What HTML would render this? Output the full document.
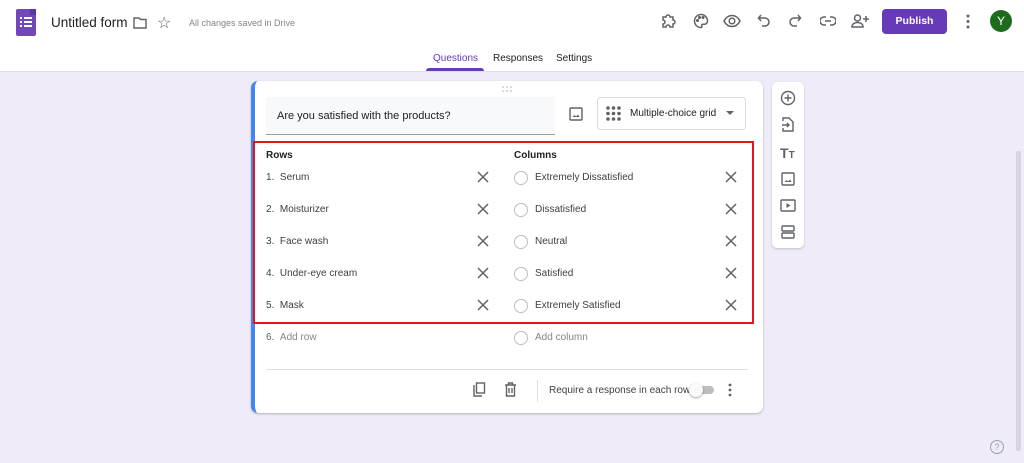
<!DOCTYPE html>
<html><head><meta charset="utf-8"><style>
*{margin:0;padding:0;box-sizing:border-box}
body{width:1024px;height:463px;overflow:hidden;background:#f0ebf8;font-family:"Liberation Sans",Arial,sans-serif;position:relative;color:#202124}
.a{position:absolute}
.hdr{left:0;top:0;width:1024px;height:72px;background:#fff;border-bottom:1px solid #e0e0e0}
.t{font-size:10px;color:#3c4043;white-space:nowrap}
.r{width:14px;height:14px;border:1.5px solid #bdbdbd;border-radius:50%}
svg{display:block}
</style></head><body>
<div class="a hdr"></div>
<div class="a" style="left:16px;top:9px;width:20px;height:27px;background:#7248b9;border-radius:2px"></div>
<div class="a" style="left:30px;top:9px;width:6px;height:6px;background:#5d34a5"></div>
<svg class="a" style="left:20px;top:16px" width="12" height="12"><g fill="#fff"><rect x="0" y="1" width="2" height="2"/><rect x="4" y="1" width="8" height="2"/><rect x="0" y="5" width="2" height="2"/><rect x="4" y="5" width="8" height="2"/><rect x="0" y="9" width="2" height="2"/><rect x="4" y="9" width="8" height="2"/></g></svg>
<div class="a" style="left:51px;top:15px;font-size:13.5px;color:#202124;white-space:nowrap">Untitled form</div>
<svg class="a" style="left:133px;top:17px" width="14" height="12"><path d="M1 1h5l1.5 1.5H13V11H1z" fill="none" stroke="#5f6368" stroke-width="1.4"/></svg>
<div class="a" style="left:157px;top:13px;font-size:16px;color:#5f6368">☆</div>
<div class="a" style="left:189px;top:18px;font-size:9px;color:#80868b">All changes saved in Drive</div>
<svg class="a" style="left:660px;top:13px" width="16" height="16" fill="none" stroke="#5f6368" stroke-width="1.5"><path d="M3 4h3a2 2 0 1 1 4 0h3v3a2 2 0 1 1 0 4v3H10a2 2 0 1 0-4 0H3v-3a2 2 0 1 0 0-4z"/></svg>
<svg class="a" style="left:693px;top:13px" width="16" height="16" fill="none" stroke="#5f6368" stroke-width="1.5"><path d="M8 1.5a6.5 6.5 0 1 0 0 13c1 0 1.3-.8.8-1.5-.5-.8 0-1.8 1-1.8h1.7a3 3 0 0 0 3-3C14.5 4.4 11.6 1.5 8 1.5z"/><circle cx="4.5" cy="7.5" r=".8"/><circle cx="6.5" cy="4.5" r=".8"/><circle cx="10" cy="4.5" r=".8"/></svg>
<svg class="a" style="left:723px;top:14px" width="18" height="14" fill="none" stroke="#5f6368" stroke-width="1.5"><path d="M1 7c2-4 5-5.5 8-5.5S15 3 17 7c-2 4-5 5.5-8 5.5S3 11 1 7z"/><circle cx="9" cy="7" r="2.8"/></svg>
<svg class="a" style="left:757px;top:14px" width="14" height="14" fill="none" stroke="#5f6368" stroke-width="1.5"><path d="M4 1L1.5 4 4 7M1.5 4H8a4 4 0 0 1 0 8H5"/></svg>
<svg class="a" style="left:788px;top:14px" width="14" height="14" fill="none" stroke="#5f6368" stroke-width="1.5"><path d="M10 1l2.5 3L10 7M12.5 4H6a4 4 0 0 0 0 8h3"/></svg>
<svg class="a" style="left:820px;top:15px" width="16" height="12" fill="none" stroke="#5f6368" stroke-width="1.5"><path d="M6 2H4a4 4 0 0 0 0 8h2M10 2h2a4 4 0 0 1 0 8h-2M5 6h6"/></svg>
<svg class="a" style="left:851px;top:13px" width="18" height="16" fill="none" stroke="#5f6368" stroke-width="1.5"><circle cx="6.5" cy="5" r="3"/><path d="M1 14c0-3 2.5-4.5 5.5-4.5S12 11 12 14zM15 3v6M12 6h6"/></svg>
<div class="a" style="left:882px;top:9px;width:65px;height:25px;background:#673ab7;border-radius:4px;color:#fff;font-size:10.5px;font-weight:bold;text-align:center;line-height:25px">Publish</div>
<svg class="a" style="left:966px;top:14px" width="4" height="15" fill="#5f6368"><circle cx="2" cy="2" r="1.5"/><circle cx="2" cy="7.5" r="1.5"/><circle cx="2" cy="13" r="1.5"/></svg>
<div class="a" style="left:990px;top:10px;width:22px;height:22px;border-radius:50%;background:#1e6b1e;color:#fff;font-size:12px;text-align:center;line-height:22px">Y</div>
<div class="a" style="left:433px;top:53px;font-size:10px;color:#673ab7">Questions</div>
<div class="a" style="left:426px;top:68px;width:58px;height:3px;background:#673ab7;border-radius:3px 3px 0 0"></div>
<div class="a" style="left:493px;top:53px;font-size:10px;color:#202124">Responses</div>
<div class="a" style="left:556px;top:53px;font-size:10px;color:#202124">Settings</div>
<div class="a" style="left:251px;top:81px;width:512px;height:332px;background:#fff;border-radius:7px;box-shadow:0 1px 2px rgba(0,0,0,.25);border-left:4px solid #4285f4"></div>
<svg class="a" style="left:502px;top:86px" width="10" height="6" fill="#9aa0a6"><circle cx="1" cy="1" r=".7"/><circle cx="5" cy="1" r=".7"/><circle cx="9" cy="1" r=".7"/><circle cx="1" cy="5" r=".7"/><circle cx="5" cy="5" r=".7"/><circle cx="9" cy="5" r=".7"/></svg>
<div class="a" style="left:266px;top:97px;width:289px;height:38px;background:#f8f9fa;border-bottom:1px solid #9e9e9e"></div>
<div class="a" style="left:277px;top:110px;font-size:11px;color:#202124;white-space:nowrap">Are you satisfied with the products?</div>
<svg class="a" style="left:569px;top:107px" width="14" height="14" fill="none" stroke="#5f6368" stroke-width="1.4"><rect x="1" y="1" width="12" height="12" rx="1"/><path d="M3.5 10l2-2 1.5 1.5 2-2 1.5 2.5z" fill="#5f6368" stroke="none"/></svg>
<div class="a" style="left:597px;top:97px;width:149px;height:33px;border:1px solid #dadce0;border-radius:4px"></div>
<svg class="a" style="left:606px;top:106px" width="15" height="15" fill="#5f6368"><circle cx="2" cy="2" r="1.8"/><circle cx="7.5" cy="2" r="1.8"/><circle cx="13" cy="2" r="1.8"/><circle cx="2" cy="7.5" r="1.8"/><circle cx="7.5" cy="7.5" r="1.8"/><circle cx="13" cy="7.5" r="1.8"/><circle cx="2" cy="13" r="1.8"/><circle cx="7.5" cy="13" r="1.8"/><circle cx="13" cy="13" r="1.8"/></svg>
<div class="a" style="left:630px;top:108px;font-size:10px;color:#202124;white-space:nowrap">Multiple-choice grid</div>
<svg class="a" style="left:726px;top:111px" width="8" height="5" fill="#5f6368"><path d="M0 0h8L4 4z"/></svg>
<div class="a" style="left:253px;top:141px;width:501px;height:183px;border:2.5px solid #e3161c"></div>
<div class="a t" style="left:266px;top:150px;font-weight:bold;color:#202124">Rows</div>
<div class="a t" style="left:514px;top:150px;font-weight:bold;color:#202124">Columns</div>
<div class="a t" style="left:266px;top:172px">1.&nbsp;&nbsp;Serum</div>
<div class="a t" style="left:266px;top:204px">2.&nbsp;&nbsp;Moisturizer</div>
<div class="a t" style="left:266px;top:236px">3.&nbsp;&nbsp;Face wash</div>
<div class="a t" style="left:266px;top:268px">4.&nbsp;&nbsp;Under-eye cream</div>
<div class="a t" style="left:266px;top:300px">5.&nbsp;&nbsp;Mask</div>
<div class="a t" style="left:266px;top:332px;color:#80868b"><span style="color:#5f6368">6.</span>&nbsp;&nbsp;Add row</div>
<div class="a r" style="left:514px;top:171px"></div><div class="a t" style="left:535px;top:172px">Extremely Dissatisfied</div>
<div class="a r" style="left:514px;top:203px"></div><div class="a t" style="left:535px;top:204px">Dissatisfied</div>
<div class="a r" style="left:514px;top:235px"></div><div class="a t" style="left:535px;top:236px">Neutral</div>
<div class="a r" style="left:514px;top:267px"></div><div class="a t" style="left:535px;top:268px">Satisfied</div>
<div class="a r" style="left:514px;top:299px"></div><div class="a t" style="left:535px;top:300px">Extremely Satisfied</div>
<div class="a r" style="left:514px;top:331px"></div><div class="a t" style="left:535px;top:332px;color:#80868b">Add column</div>
<svg class="a" style="left:0;top:0" width="1024" height="463" fill="none" stroke="#5f6368" stroke-width="1.5">
<path d="M478 172l10 10M488 172l-10 10M478 204l10 10M488 204l-10 10M478 236l10 10M488 236l-10 10M478 268l10 10M488 268l-10 10M478 300l10 10M488 300l-10 10"/>
<path d="M726 172l10 10M736 172l-10 10M726 204l10 10M736 204l-10 10M726 236l10 10M736 236l-10 10M726 268l10 10M736 268l-10 10M726 300l10 10M736 300l-10 10"/>
</svg>
<div class="a" style="left:266px;top:369px;width:482px;height:1px;background:#e0e0e0"></div>
<svg class="a" style="left:472px;top:382px" width="14" height="15" fill="none" stroke="#5f6368" stroke-width="1.4"><path d="M2 3v11h8"/><rect x="4.5" y="1" width="8" height="10"/></svg>
<svg class="a" style="left:504px;top:382px" width="13" height="15" fill="none" stroke="#5f6368" stroke-width="1.4"><path d="M1 3h11M4.5 3V1h4v2M2.5 3v11h8V3M5 6v5M8 6v5"/></svg>
<div class="a" style="left:537px;top:380px;width:1px;height:22px;background:#e0e0e0"></div>
<div class="a t" style="left:549px;top:385px">Require a response in each row</div>
<div class="a" style="left:694px;top:386px;width:20px;height:8px;border-radius:4px;background:#bdbdbd"></div>
<div class="a" style="left:689px;top:383px;width:14px;height:14px;border-radius:50%;background:#fafafa;box-shadow:0 1px 2px rgba(0,0,0,.35)"></div>
<svg class="a" style="left:728px;top:383px" width="4" height="14" fill="#5f6368"><circle cx="2" cy="2" r="1.4"/><circle cx="2" cy="7" r="1.4"/><circle cx="2" cy="12" r="1.4"/></svg>
<div class="a" style="left:772px;top:82px;width:32px;height:166px;background:#fff;border-radius:5px;box-shadow:0 1px 2px rgba(0,0,0,.2)"></div>
<svg class="a" style="left:780px;top:90px" width="16" height="16" fill="none" stroke="#5f6368" stroke-width="1.4"><circle cx="8" cy="8" r="6.5"/><path d="M8 4.5v7M4.5 8h7"/></svg>
<svg class="a" style="left:781px;top:117px" width="14" height="16" fill="none" stroke="#5f6368" stroke-width="1.4"><path d="M2 4V1h6l4 4v9H2v-3M1 8h7M6 6l2 2-2 2"/></svg>
<div class="a" style="left:780px;top:145px;font-size:14px;font-weight:bold;color:#5f6368">T<span style="font-size:10px">T</span></div>
<svg class="a" style="left:781px;top:172px" width="14" height="14" fill="none" stroke="#5f6368" stroke-width="1.4"><rect x="1" y="1" width="12" height="12" rx="1"/><path d="M3.5 10l2-2 1.5 1.5 2-2 1.5 2.5z" fill="#5f6368" stroke="none"/></svg>
<svg class="a" style="left:780px;top:199px" width="16" height="13" fill="none" stroke="#5f6368" stroke-width="1.4"><rect x="1" y="1" width="14" height="11" rx="1"/><path d="M6.5 4v5l4-2.5z" fill="#5f6368" stroke="none"/></svg>
<svg class="a" style="left:781px;top:225px" width="14" height="14" fill="none" stroke="#5f6368" stroke-width="1.4"><rect x="1" y="1" width="12" height="5" rx="1"/><rect x="1" y="8" width="12" height="5" rx="1"/></svg>
<div class="a" style="left:1016px;top:151px;width:5px;height:300px;background:#d8d6dc;border-radius:2px"></div>
<div class="a" style="left:990px;top:440px;width:14px;height:14px;border:1.3px solid #9aa0a6;border-radius:50%;font-size:9px;color:#9aa0a6;text-align:center;line-height:12px">?</div>
</body></html>
